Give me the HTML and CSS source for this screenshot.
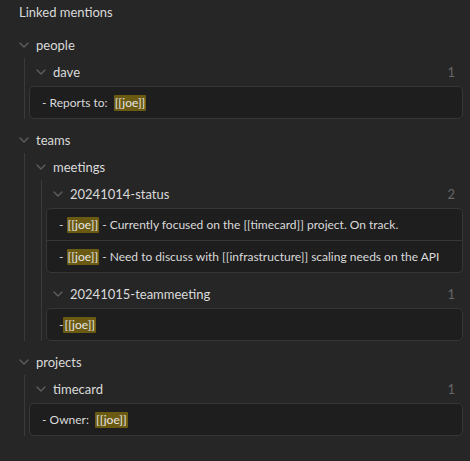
FILE: index.html
```html
<!DOCTYPE html>
<html>
<head>
<meta charset="utf-8">
<link rel="stylesheet" href="styles.css">
</head>
<body>
<div class="pane">
  <div class="title">Linked mentions</div>
  <div class="tree">
    <div class="node">
      <div class="row top">
        <svg class="chev" viewBox="0 0 24 24"><path d="m6 9 6 6 6-6"/></svg>
        <span class="label">people</span>
      </div>
      <div class="children">
        <div class="node leaf">
          <div class="row">
            <svg class="chev" viewBox="0 0 24 24"><path d="m6 9 6 6 6-6"/></svg>
            <span class="label">dave</span>
            <span class="count">1</span>
          </div>
          <div class="matches">
            <div class="match">- Reports to:&nbsp; <span class="hl">[[joe]]</span></div>
          </div>
        </div>
      </div>
    </div>

    <div class="node">
      <div class="row top">
        <svg class="chev" viewBox="0 0 24 24"><path d="m6 9 6 6 6-6"/></svg>
        <span class="label">teams</span>
      </div>
      <div class="children">
        <div class="node">
          <div class="row">
            <svg class="chev" viewBox="0 0 24 24"><path d="m6 9 6 6 6-6"/></svg>
            <span class="label">meetings</span>
          </div>
          <div class="children inner">
            <div class="node leaf">
              <div class="row">
                <svg class="chev" viewBox="0 0 24 24"><path d="m6 9 6 6 6-6"/></svg>
                <span class="label">20241014-status</span>
                <span class="count">2</span>
              </div>
              <div class="matches">
                <div class="match">- <span class="hl">[[joe]]</span> - Currently focused on the [[timecard]] project. On track.</div>
                <div class="match">- <span class="hl">[[joe]]</span> - Need to discuss with [[infrastructure]] scaling needs on the API</div>
              </div>
            </div>
            <div class="node leaf">
              <div class="row">
                <svg class="chev" viewBox="0 0 24 24"><path d="m6 9 6 6 6-6"/></svg>
                <span class="label">20241015-teammeeting</span>
                <span class="count">1</span>
              </div>
              <div class="matches">
                <div class="match">-<span class="hl">[[joe]]</span></div>
              </div>
            </div>
          </div>
        </div>
      </div>
    </div>

    <div class="node">
      <div class="row top">
        <svg class="chev" viewBox="0 0 24 24"><path d="m6 9 6 6 6-6"/></svg>
        <span class="label">projects</span>
      </div>
      <div class="children">
        <div class="node leaf">
          <div class="row">
            <svg class="chev" viewBox="0 0 24 24"><path d="m6 9 6 6 6-6"/></svg>
            <span class="label">timecard</span>
            <span class="count">1</span>
          </div>
          <div class="matches">
            <div class="match">- Owner:&nbsp; <span class="hl">[[joe]]</span></div>
          </div>
        </div>
      </div>
    </div>
  </div>
</div>
</body>
</html>
```

FILE: styles.css
```css
html, body {
  margin: 0;
  padding: 0;
  background: #262626;
}
body {
  width: 470px;
  height: 461px;
  overflow: hidden;
  font-family: "Lato", "Open Sans", sans-serif;
  color: #dadada;
}
.pane {
  padding: 0 7px 0 0;
}
.title {
  height: 31px;
  line-height: 25px;
  padding-left: 19px;
  font-size: 13px;
}
.node.leaf {
  margin-bottom: 7px;
}
.row {
  display: flex;
  align-items: center;
  height: 27px;
  padding-left: 4px;
  font-size: 13px;
}
.row.top {
  padding-left: 16px;
}
.chev {
  width: 16px;
  height: 16px;
  flex: none;
  fill: none;
  stroke: #5e5e5e;
  stroke-width: 2;
  stroke-linecap: round;
  stroke-linejoin: round;
  margin-right: 4px;
}
.label {
  flex: 1;
  white-space: nowrap;
}
.count {
  font-size: 13px;
  color: #666;
  padding-right: 8px;
}
.children {
  margin-left: 24px;
  border-left: 1px solid #3a3a3a;
  padding-left: 4px;
}
.children.inner {
  margin-left: 12px;
}
.matches {
  margin-top: 1px;
  background: #1e1e1e;
  border: 1px solid #363636;
  border-radius: 5px;
}
.match {
  height: 31px;
  display: flex;
  align-items: center;
  padding-left: 12px;
  font-size: 12px;
  white-space: pre;
}
.match + .match {
  border-top: 1px solid #363636;
}
.hl {
  background: #6b5a12;
  color: #e6e6e6;
  padding: 0 1px;
  line-height: 16px;
  border-radius: 1px;
}
```
